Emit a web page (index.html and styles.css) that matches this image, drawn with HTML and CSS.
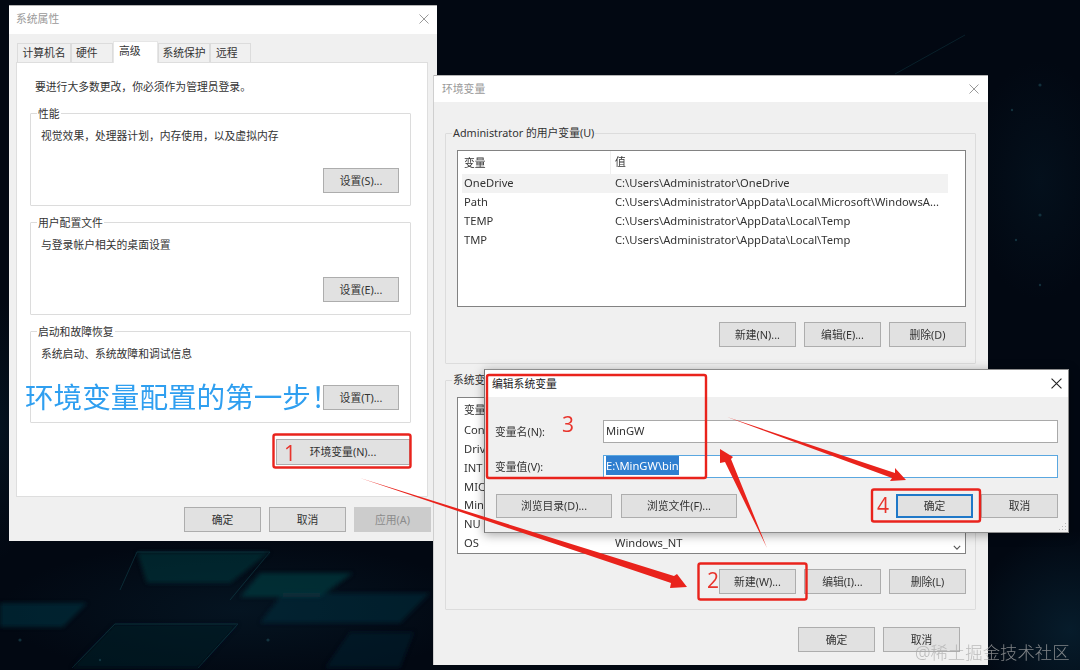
FILE: index.html
```html
<!DOCTYPE html>
<html lang="zh-CN">
<head>
<meta charset="utf-8">
<title>环境变量配置</title>
<link rel="stylesheet" href="styles.css">
</head>
<body>
<main class="desktop">
  <svg class="wallpaper" viewBox="0 0 1080 670" aria-hidden="true">
    <defs>
      <radialGradient id="glowA" cx="0.5" cy="0.5" r="0.5">
        <stop offset="0" stop-color="#0b3044" stop-opacity=".5"/>
        <stop offset="1" stop-color="#0b3044" stop-opacity="0"/>
      </radialGradient>
      <filter id="soft"><feGaussianBlur stdDeviation="2"/></filter>
    </defs>
    <rect width="1080" height="670" fill="#020812"/>
    <ellipse cx="1070" cy="630" rx="100" ry="100" fill="url(#glowA)"/>
    <ellipse cx="1040" cy="180" rx="70" ry="120" fill="url(#glowA)" opacity=".4"/>
    <ellipse cx="0" cy="430" rx="30" ry="130" fill="url(#glowA)" opacity=".5"/>
    <ellipse cx="240" cy="610" rx="240" ry="70" fill="url(#glowA)" opacity=".6"/>
    <g filter="url(#soft)">
      <path d="M137 552H270L230 583H147Z" fill="#0a3a40" opacity=".55"/>
      <path d="M260 573H353L320 597H240Z" fill="#0a4045" opacity=".6"/>
      <path d="M0 603H87L63 627H0Z" fill="#08303f" opacity=".6"/>
      <path d="M283 593H430L400 623H260Z" fill="#083440" opacity=".5"/>
      <path d="M115 624H238L198 668H72Z" fill="#061a24" opacity=".6"/>
      <path d="M350 632H414L400 668H325Z" fill="#07262f" opacity=".5"/>
    </g>
    <g stroke="#14454f" stroke-width="1" fill="none" opacity=".4">
      <path d="M72 668L115 624H238L198 668"/>
      <path d="M120 590L137 552H270L230 600"/>
      <path d="M895 74L965 35"/>
    </g>
    <g fill="#1f4c58" opacity=".6">
      <circle cx="20" cy="640" r="1.6"/><circle cx="268" cy="640" r="1.6"/><circle cx="100" cy="660" r="1.2"/>
      <circle cx="1040" cy="85" r="1.6"/><circle cx="1012" cy="110" r="1.2"/><circle cx="1040" cy="215" r="1.6"/>
      <circle cx="1040" cy="285" r="1.2"/><circle cx="1016" cy="240" r="1.2"/>
    </g>
  </svg>

  <section class="win win-sys">
    <header class="titlebar">
      <span class="title title-muted">系统属性</span>
      <svg class="close close-muted" viewBox="0 0 10 10"><path d="M.5.5l9 9M9.5.5l-9 9"/></svg>
    </header>
    <div class="win-sys-body">
      <nav class="tabs">
        <span class="tab tab-w1">计算机名</span>
        <span class="tab tab-w2">硬件</span>
        <span class="tab tab-on">高级</span>
        <span class="tab tab-w3">系统保护</span>
        <span class="tab tab-w4">远程</span>
      </nav>
      <div class="panel">
        <p class="note">要进行大多数更改，你必须作为管理员登录。</p>
        <div class="group group-white">
          <span class="legend">性能</span>
          <p class="group-text">视觉效果，处理器计划，内存使用，以及虚拟内存</p>
          <span class="btn btn-in">设置(S)...</span>
        </div>
        <div class="group group-white">
          <span class="legend">用户配置文件</span>
          <p class="group-text">与登录帐户相关的桌面设置</p>
          <span class="btn btn-in">设置(E)...</span>
        </div>
        <div class="group group-white group-last">
          <span class="legend">启动和故障恢复</span>
          <p class="group-text">系统启动、系统故障和调试信息</p>
          <span class="btn btn-in">设置(T)...</span>
        </div>
        <span class="btn btn-env">环境变量(N)...</span>
      </div>
      <footer class="sys-footer">
        <span class="btn btn-sm">确定</span>
        <span class="btn btn-sm">取消</span>
        <span class="btn btn-sm btn-off">应用(A)</span>
      </footer>
    </div>
  </section>

  <section class="win win-env">
    <header class="titlebar titlebar-env">
      <span class="title title-muted">环境变量</span>
      <svg class="close close-muted" viewBox="0 0 10 10"><path d="M.5.5l9 9M9.5.5l-9 9"/></svg>
    </header>
    <div class="env-body">
      <div class="group env-group env-user">
        <span class="legend legend-env">Administrator 的用户变量(U)</span>
        <div class="list">
          <div class="list-head"><span class="col-name">变量</span><span class="col-val col-sep">值</span></div>
          <div class="row row-on"><span class="col-name">OneDrive</span><span class="col-val">C:\Users\Administrator\OneDrive</span></div>
          <div class="row"><span class="col-name">Path</span><span class="col-val">C:\Users\Administrator\AppData\Local\Microsoft\WindowsA...</span></div>
          <div class="row"><span class="col-name">TEMP</span><span class="col-val">C:\Users\Administrator\AppData\Local\Temp</span></div>
          <div class="row"><span class="col-name">TMP</span><span class="col-val">C:\Users\Administrator\AppData\Local\Temp</span></div>
        </div>
        <div class="btn-row">
          <span class="btn btn-sm">新建(N)...</span>
          <span class="btn btn-sm">编辑(E)...</span>
          <span class="btn btn-sm">删除(D)</span>
        </div>
      </div>
      <div class="group env-group env-system">
        <span class="legend legend-env">系统变</span>
        <div class="list">
          <div class="list-head"><span class="col-name">变量</span></div>
          <div class="row"><span class="col-name">Con</span></div>
          <div class="row"><span class="col-name">Driv</span></div>
          <div class="row"><span class="col-name">INT</span></div>
          <div class="row"><span class="col-name">MIC</span></div>
          <div class="row"><span class="col-name">Min</span></div>
          <div class="row"><span class="col-name">NU</span></div>
          <div class="row"><span class="col-name">OS</span><span class="col-val">Windows_NT</span></div>
          <svg class="chevron" viewBox="0 0 10 6"><path d="M1 1l4 4 4-4"/></svg>
        </div>
        <div class="btn-row">
          <span class="btn btn-sm">新建(W)...</span>
          <span class="btn btn-sm">编辑(I)...</span>
          <span class="btn btn-sm">删除(L)</span>
        </div>
      </div>
      <footer class="env-footer">
        <span class="btn btn-sm">确定</span>
        <span class="btn btn-sm">取消</span>
      </footer>
    </div>
  </section>

  <section class="win win-edit">
    <header class="titlebar titlebar-edit">
      <span class="title">编辑系统变量</span>
      <svg class="close close-dark" viewBox="0 0 10 10"><path d="M.5.5l9 9M9.5.5l-9 9"/></svg>
    </header>
    <div class="edit-body">
      <div class="field">
        <span class="field-label">变量名(N):</span>
        <span class="input">MinGW</span>
      </div>
      <div class="field">
        <span class="field-label">变量值(V):</span>
        <span class="input input-focus"><span class="selected">E:\MinGW\bin</span></span>
      </div>
      <div class="edit-actions">
        <span class="btn btn-wide">浏览目录(D)...</span>
        <span class="btn btn-wide">浏览文件(F)...</span>
        <span class="spacer"></span>
        <span class="btn btn-sm btn-default">确定</span>
        <span class="btn btn-sm">取消</span>
      </div>
      <span class="grip"></span>
    </div>
  </section>

  <svg class="marks" viewBox="0 0 1080 670" aria-hidden="true">
    <g class="mark-box">
      <rect x="273.5" y="434.5" width="137" height="33" rx="2"/>
      <rect x="698.5" y="563.5" width="108" height="36" rx="2"/>
      <rect x="487" y="375" width="219" height="103" rx="2"/>
      <rect x="872" y="489.5" width="108" height="32" rx="2"/>
    </g>
    <g class="mark-arrow">
      <path d="M360 478L674 576L677 574L687 587L670 588L671 583Z"/>
      <path d="M767 548L731 459L733 457L720 449L720 463L725 462Z"/>
      <path d="M727 417L895 473L895 468L906 480L890 481L892 478Z"/>
    </g>
  </svg>

  <span class="callout">环境变量配置的第一步！</span>
  <span class="num num-1">1</span>
  <span class="num num-2">2</span>
  <span class="num num-3">3</span>
  <span class="num num-4">4</span>
  <span class="watermark">@稀土掘金技术社区</span>
</main>
</body>
</html>
```

FILE: styles.css
```css
* { box-sizing: border-box; }
html, body { margin: 0; padding: 0; }
body { width: 1080px; height: 670px; overflow: hidden; background: #020812; }
p { margin: 0; }

.desktop {
  position: relative;
  width: 1080px;
  height: 670px;
  overflow: hidden;
  font: 10.8px/16px "Noto Sans", "Noto Sans CJK SC", sans-serif;
  color: #333;
  filter: blur(.3px);
}
.wallpaper, .marks { position: absolute; left: 0; top: 0; width: 1080px; height: 670px; }

/* windows on the desktop */
.win {
  position: absolute;
  background: #f0f0f0;
  display: flex;
  flex-direction: column;
}
.win-sys { left: 9px; top: 5px; width: 428px; height: 536px; border-top: 1px solid #b5b5b5; }
.win-env { left: 434px; top: 75px; width: 554px; height: 590px; border-top: 1px solid #b5b5b5; box-shadow: -1px 0 0 #cfcfcf; }
.win-edit { left: 484px; top: 369px; width: 585px; height: 164px; border: 1px solid #8d8d8d; border-left-color: #777; box-shadow: 0 2px 10px rgba(0,0,0,.35); }

.titlebar {
  flex: none;
  height: 28px;
  background: #fff;
  display: flex;
  align-items: center;
  justify-content: space-between;
  padding: 0 8px 2px 7px;
}
.titlebar-env { height: 26px; padding: 0 9px 0 8px; }
.titlebar-edit { height: 27px; padding: 0 6px 0 7px; }
.title { color: #222; }
.title-muted { color: #9a9a9a; }
.close { width: 10px; height: 10px; fill: none; stroke-width: 1; }
.close-muted { stroke: #9a9a9a; }
.close-dark { stroke: #222; width: 11px; height: 11px; }

/* system properties */
.win-sys-body { flex: 1; padding: 7px 0 0 7px; display: flex; flex-direction: column; }
.tabs { display: flex; height: 21px; align-items: flex-end; padding-left: 1px; }
.tab {
  height: 19px;
  line-height: 18px;
  text-align: center;
  background: #f0f0f0;
  border: 1px solid #dcdcdc;
  border-bottom: 0;
}
.tab-w1 { width: 54px; }
.tab-w2 { width: 42px; text-align: left; padding-left: 4px; }
.tab-w3 { width: 52px; }
.tab-w4 { width: 41px; text-align: left; padding-left: 5px; }
.tab-on { width: 45px; height: 22px; line-height: 17px; text-align: left; padding-left: 5px; background: #fff; border-color: #e6e6e6; position: relative; z-index: 1; margin-bottom: -1px; }
.panel {
  width: 412px;
  height: 435px;
  background: #fff;
  border: 1px solid #dedede;
  padding: 16px 16px 0 13px;
  display: flex;
  flex-direction: column;
}
.note { padding-left: 5px; }
.group { position: relative; border: 1px solid #dcdcdc; border-radius: 1px; }
.group-white {
  margin-top: 18px;
  height: 93px;
  padding: 14px 11px 12px 10px;
  display: flex;
  flex-direction: column;
  align-items: flex-start;
}
.group-white + .group-white { margin-top: 16px; }
.group-white.group-last { height: 92px; }
.group-text { flex: 1; }
.legend { position: absolute; left: 6px; top: -8px; background: #fff; padding: 0 1px; }
.btn {
  flex: none;
  display: flex;
  align-items: center;
  justify-content: center;
  background: #e1e1e1;
  border: 1px solid #adadad;
  color: #333;
  white-space: nowrap;
}
.btn-sm { width: 77px; height: 25px; }
.btn-in { width: 76px; height: 25px; align-self: flex-end; }
.btn-env { width: 134px; height: 26px; align-self: flex-end; margin: 16px 1px 0 0; }
.btn-off { background: #cccccc; border-color: #cccccc; color: #8b8b8b; }
.sys-footer { display: flex; justify-content: flex-end; gap: 8px; margin-top: 10px; padding-right: 6px; }

/* environment variables */
.env-body { flex: 1; padding: 31px 12px 0 11px; display: flex; flex-direction: column; }
.env-group { height: 231px; padding: 16px 9px 0 11px; }
.env-system { height: 230px; margin-top: 16px; }
.legend-env { background: #f0f0f0; left: 6px; top: -9px; }
.list {
  position: relative;
  height: 157px;
  background: #fff;
  border: 1px solid #828282;
  padding-left: 4px;
  overflow: hidden;
}
.list-head { display: flex; width: 486px; height: 23px; align-items: center; }
.row { display: flex; width: 486px; height: 18.75px; align-items: center; font-size: 11.2px; }
.row-on { background: #f2f2f2; }
.col-name { width: 148px; padding-left: 2px; white-space: nowrap; overflow: hidden; }
.col-val { flex: 1; padding-left: 5px; white-space: nowrap; }
.col-sep { border-left: 1px solid #efefef; padding-left: 4px; height: 23px; line-height: 22px; }
.chevron { position: absolute; right: 4px; bottom: 3px; width: 8px; height: 5px; fill: none; stroke: #555; stroke-width: 1.4; }
.btn-row { display: flex; justify-content: flex-end; gap: 8px; margin-top: 15px; }
.env-footer { display: flex; justify-content: flex-end; gap: 8px; margin-top: 17px; padding-right: 16px; }

/* edit dialog */
.edit-body { position: relative; flex: 1; padding: 23px 10px 0 10px; display: flex; flex-direction: column; }
.field { display: flex; align-items: center; height: 23px; margin-bottom: 12px; }
.field-label { width: 108px; flex: none; }
.input {
  flex: 1;
  height: 23px;
  line-height: 20px;
  font-size: 11.2px;
  background: #fff;
  border: 1px solid #a9a9a9;
  padding-left: 2px;
}
.input-focus { border-color: #5aa7e0; }
.selected { background: #2f7fd0; color: #fff; display: inline-block; height: 19px; line-height: 19px; vertical-align: top; }
.edit-actions { display: flex; margin-top: 4px; padding-left: 1px; gap: 9px; }
.btn-wide { width: 116px; height: 24px; }
.btn-sm.btn-default { border: 2px solid #1f78c8; margin-right: -1px; }
.edit-actions .btn-sm { height: 24px; }
.spacer { flex: 1; }
.grip {
  position: absolute;
  right: 2px;
  bottom: 2px;
  width: 8px;
  height: 8px;
  background: radial-gradient(circle, #b8b8b8 1px, transparent 1px) 0 0 / 3px 3px;
  clip-path: polygon(100% 0, 100% 100%, 0 100%);
}

/* annotations */
.mark-box rect { fill: none; stroke: #e9231c; stroke-width: 2.4; }
.mark-arrow path { fill: #e9231c; }
.callout {
  position: absolute;
  left: 25px;
  top: 377px;
  font: 400 28.6px/38px "Noto Sans CJK SC", sans-serif;
  color: #2f9ff0;
  white-space: nowrap;
}
.num {
  position: absolute;
  font: 400 21px/24px "Open Sans", sans-serif;
  color: #e8342c;
}
.num-1 { left: 284px; top: 441px; }
.num-2 { left: 707px; top: 568px; }
.num-3 { left: 562px; top: 412px; }
.num-4 { left: 877px; top: 493px; }
.watermark {
  position: absolute;
  left: 915px;
  top: 640px;
  font: 300 17.4px/24px "Noto Sans", "Noto Sans CJK SC", sans-serif;
  color: rgba(170,170,170,.75);
  white-space: nowrap;
}
```
